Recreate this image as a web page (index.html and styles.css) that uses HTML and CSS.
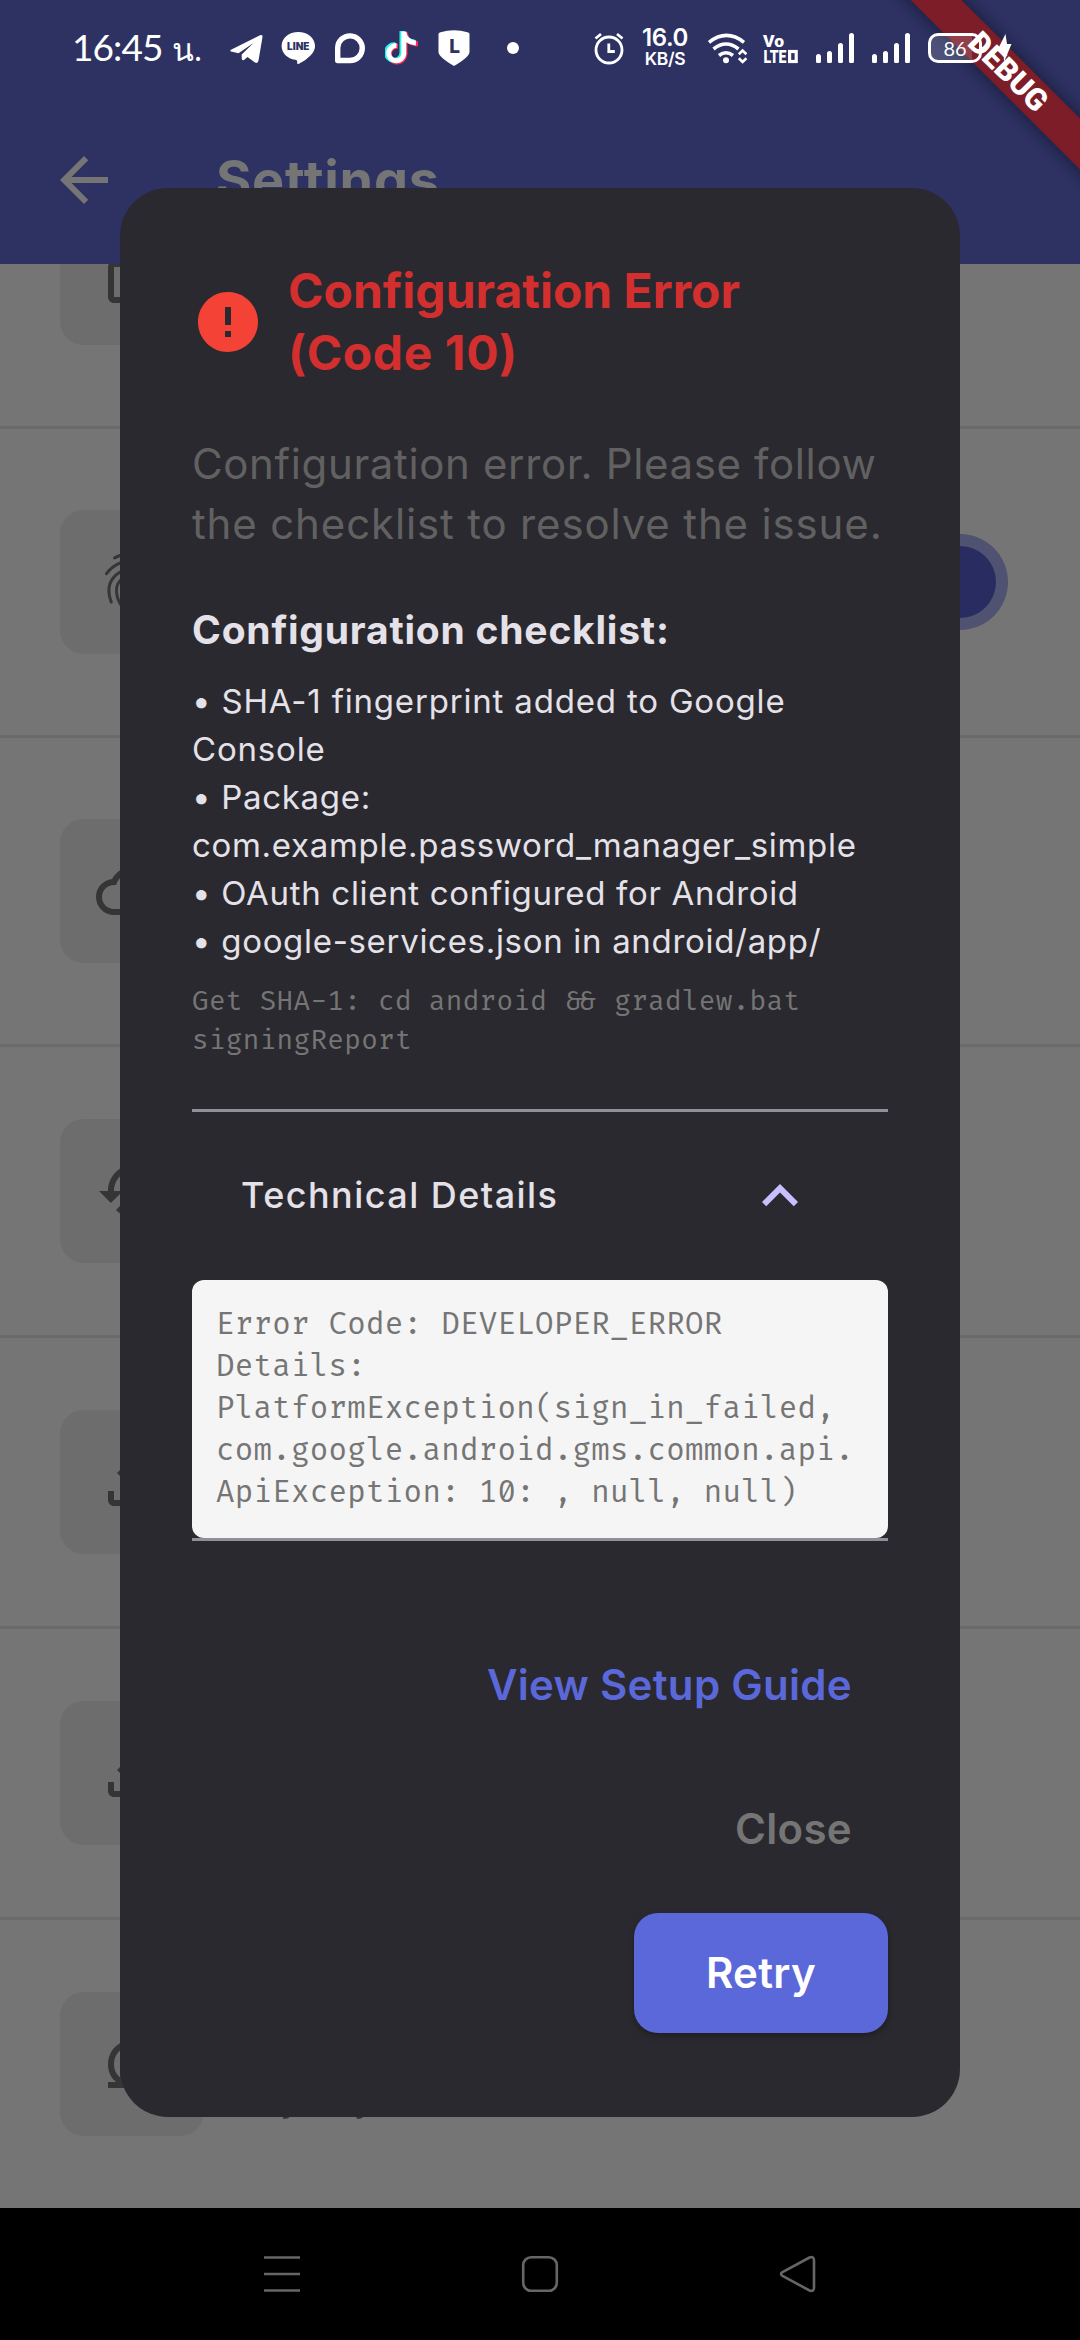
FILE: index.html
```html
<!DOCTYPE html>
<html lang="en">
<head>
<meta charset="utf-8">
<title>Settings</title>
<link rel="stylesheet" href="styles.css">
</head>
<body>
<div class="screen">
  <header class="appbar">
    <svg class="back" viewBox="0 0 24 24"><path d="M20 11H7.83l5.59-5.59L12 4l-8 8 8 8 1.41-1.41L7.83 13H20v-2z"/></svg>
    <h1 class="appbar-title">Settings</h1>
  </header>

  <main class="list">
    <div class="row tall">
      <div class="tile"><svg viewBox="0 0 24 24"><path d="M18 8h-1V6c0-2.76-2.24-5-5-5S7 3.24 7 6v2H6c-1.1 0-2 .9-2 2v10c0 1.1.9 2 2 2h12c1.1 0 2-.9 2-2V10c0-1.100-.9-2-2-2zM9 6c0-1.660 1.340-3 3-3s3 1.340 3 3v2H9V6zm9 14H6V10h12v10z"/></svg></div>
    </div>
    <div class="row tall">
      <div class="tile"><svg viewBox="0 0 24 24"><path d="M17.810 4.470c-.08 0-.16-.02-.23-.06C15.660 3.420 14 3 12.010 3c-1.980 0-3.860.47-5.570 1.410-.24.130-.54.040-.68-.2-.13-.24-.04-.55.200-.68C7.820 2.520 9.860 2 12.010 2c2.130 0 3.990.47 6.030 1.520.250.130.340.430.210.670-.09.180-.26.280-.44.280zM3.500 9.720c-.1 0-.2-.03-.29-.09-.23-.16-.28-.47-.12-.7.990-1.400 2.250-2.500 3.750-3.270C9.980 4.040 14 4.030 17.150 5.650c1.500.770 2.760 1.860 3.750 3.250.160.220.110.540-.12.700-.23.160-.54.110-.7-.12-.9-1.260-2.040-2.250-3.390-2.940-2.870-1.470-6.540-1.470-9.400.01-1.360.7-2.500 1.700-3.400 2.960-.08.140-.23.210-.39.210zm6.250 12.070c-.13 0-.26-.05-.35-.15-.87-.87-1.340-1.430-2.010-2.640-.69-1.230-1.050-2.730-1.050-4.340 0-2.970 2.540-5.390 5.660-5.390s5.660 2.420 5.660 5.390c0 .28-.22.500-.5.500s-.5-.22-.5-.5c0-2.420-2.090-4.390-4.660-4.390-2.570 0-4.660 1.970-4.660 4.390 0 1.440.32 2.770.93 3.850.64 1.150 1.080 1.640 1.850 2.420.190.200.190.510 0 .71-.11.100-.24.150-.37.150zM5.100 19.200c-.2 0-.38-.12-.46-.31-.6-1.500-.85-2.900-.82-4.300.12-4.100 3.700-7.300 8.100-7.300 4.500 0 8.200 3.400 8.200 7.600h-1c0-3.700-3.200-6.600-7.200-6.600-3.900 0-7 2.800-7.100 6.400-.02 1.200.2 2.500.74 3.820.1.260-.02.550-.27.650z"/></svg></div>
      <div class="switch"><span class="thumb"></span></div>
    </div>
    <div class="row tall">
      <div class="tile"><svg viewBox="0 0 24 24"><path d="M19.350 10.040C18.670 6.590 15.640 4 12 4 9.110 4 6.600 5.640 5.350 8.040 2.340 8.360 0 10.910 0 14c0 3.310 2.690 6 6 6h13c2.760 0 5-2.240 5-5 0-2.640-2.050-4.780-4.650-4.960zM19 18H6c-2.210 0-4-1.790-4-4s1.790-4 4-4h.71C7.370 7.690 9.480 6 12 6c3.040 0 5.500 2.460 5.500 5.500v.5H19c1.660 0 3 1.340 3 3s-1.340 3-3 3z"/></svg></div>
    </div>
    <div class="row">
      <div class="tile"><svg viewBox="0 0 24 24"><path d="M13 3c-4.970 0-9 4.030-9 9H1l3.890 3.890.07.14L9 12H6c0-3.870 3.130-7 7-7s7 3.130 7 7-3.130 7-7 7c-1.930 0-3.680-.79-4.940-2.060l-1.420 1.420C8.270 19.990 10.510 21 13 21c4.970 0 9-4.030 9-9s-4.030-9-9-9z"/></svg></div>
    </div>
    <div class="row">
      <div class="tile"><svg viewBox="0 0 24 24"><path d="M18 15v3H6v-3H4v3c0 1.100.9 2 2 2h12c1.100 0 2-.9 2-2v-3h-2zM7 9l1.410 1.410L11 7.830V16h2V7.830l2.590 2.580L17 9l-5-5-5 5z"/></svg></div>
    </div>
    <div class="row">
      <div class="tile"><svg viewBox="0 0 24 24"><path d="M18 15v3H6v-3H4v3c0 1.100.9 2 2 2h12c1.100 0 2-.9 2-2v-3h-2zm-1-4l-1.410-1.410L13 12.170V4h-2v8.170L8.410 9.590 7 11l5 5 5-5z"/></svg></div>
    </div>
    <div class="row last">
      <div class="tile"><svg viewBox="0 0 24 24"><path d="M4 20v-2h2.750l-.4-.35C4.800 16.270 4 14.370 4 12.050 4 8.300 6.400 5.200 10 4.250v2.100c-2.500.95-4 3.100-4 5.700 0 1.700.6 3.100 1.750 4.200l.25.200V14h2v6H4zM14 19.750v-2.100c2.500-.95 4-3.100 4-5.700 0-1.600-.6-3-1.750-4.200L16 7.550V10h-2V4h6v2h-2.750l.4.350C19.200 7.800 20 9.800 20 11.950c0 3.800-2.400 6.900-6 7.800z"/></svg></div>
      <p class="row-sub">Try my</p>
    </div>
  </main>

  <nav class="navbar">
    <svg viewBox="0 0 40 40"><path d="M2 3.500h36M2 20h36M2 36.500h36"/></svg>
    <svg viewBox="0 0 40 40"><rect x="3.200" y="3.200" width="33.600" height="33.600" rx="8"/></svg>
    <svg viewBox="0 0 40 40"><path d="M4.500 18.200L31.500 3.500Q36 2 36 6.500V33.500Q36 38 31.500 36.500L4.500 21.800Q1.500 20 4.500 18.200z"/></svg>
  </nav>

  <div class="overlay">
    <section class="dialog">
      <div class="dialog-head">
        <svg class="alert" viewBox="0 0 24 24"><path d="M12 2C6.480 2 2 6.480 2 12s4.480 10 10 10 10-4.480 10-10S17.520 2 12 2zm1 15h-2v-2h2v2zm0-4h-2V7h2v6z"/></svg>
        <h2>Configuration Error<br><span class="code">(Code 10)</span></h2>
      </div>
      <p class="message">Configuration error. Please follow<br><span class="wide">the checklist to resolve the issue.</span></p>
      <h3>Configuration checklist:</h3>
      <div class="checks">
        <p class="wide">• SHA-1 fingerprint added to Google<br>Console</p>
        <p>• Package:<br>com.example.password_manager_simple</p>
        <p>• OAuth client configured for Android</p>
        <p>• google-services.json in android/app/</p>
      </div>
      <p class="hint">Get SHA-1: cd android <span class="amp">&amp;&amp;</span> gradlew.bat<br>signingReport</p>
      <div class="details">
        <div class="details-head">
          <span>Technical Details</span>
          <svg viewBox="0 0 24 24"><path d="M12 8l-6 6 1.410 1.410L12 10.830l4.590 4.580L18 14z"/></svg>
        </div>
        <p class="log">Error Code: DEVELOPER_ERROR<br>Details:<br>PlatformException(sign_in_failed,<br>com.google.android.gms.common.api.<br>ApiException: 10: , null, null)</p>
      </div>
      <div class="actions">
        <button class="text-btn primary">View Setup Guide</button>
        <button class="text-btn close">Close</button>
        <button class="filled-btn">Retry</button>
      </div>
    </section>
  </div>

  <div class="banner-clip"><div class="banner">DEBUG</div></div>

  <div class="statusbar">
    <span class="time">16:45 <span class="thai">น.</span></span>
    <svg class="s-telegram" viewBox="230 30 33 36"><path d="M231 51.500Q229.500 50.500 231.500 49.500L260 35.300Q262.800 34.400 262.500 37L258.500 60.500Q257.800 64 255 62.500L247.500 57L244 60Q242 61 241.700 58.500V54.500L253.500 43L238.500 53.200Z"/></svg>
    <svg class="s-line" viewBox="281 30 35 36"><path d="M298.300 32c9.300 0 16.700 6.200 16.700 13.800 0 6-4 9.500-8.500 13.200-3 2.400-7 4.600-8.300 5-1.300.4-1-.8-1-2.200 0-1.200-.4-1.800-2-2-7.700-1-13.600-6.600-13.600-14C281.600 38.200 289 32 298.300 32z"/><text x="298.300" y="50.300">LINE</text></svg>
    <svg class="s-bubble" viewBox="334 32 32 32"><path d="M337.700 60.500V47.500A12.300 12.300 0 1 1 350 60.500Z"/></svg>
    <svg class="s-tiktok" viewBox="385 29 35 38">
      <path stroke="#ff2d55" d="M405 32V54.500A7.800 7.800 0 1 1 398 46.400M405.500 34C406.500 40 411 43.500 418 44"/>
      <path stroke="#25f4ee" d="M402 31V53A7.800 7.800 0 1 1 395 44.800M402.500 32C403.500 38 408 41.500 414.500 42"/>
      <path stroke="#fff" d="M403.800 31.500V54A7.600 7.600 0 1 1 396.500 45.600M404 33C405 39 409 42.500 416 43"/>
    </svg>
    <svg class="s-shield" viewBox="437 29 34 38"><path d="M438.500 35Q438 33 440.500 32.200 454 28.500 467.500 32.200 470 33 469.500 35V52Q469.500 57 454 66 438.500 57 438.500 52Z"/><text x="454.600" y="53">L</text></svg>
    <svg class="s-dot" viewBox="0 0 12 12"><circle cx="6" cy="6" r="6"/></svg>

    <svg class="s-alarm" viewBox="593 31 32 34"><circle cx="609" cy="50" r="13"/><path d="M608.800 43.500v8h6"/><path d="M595.500 38.500l5.500-4.500M622.500 38.500l-5.500-4.500"/></svg>
    <span class="speed"><b>16.0</b><b class="unit">KB/S</b></span>
    <svg class="s-wifi" viewBox="707 31 42 34"><path class="w" d="M709 42.300Q726.500 28.500 744 42.300M713.500 49Q726 39 738.500 49M719 55.500Q726 50 733 55.500"/><circle cx="726" cy="60.200" r="3"/><path class="a" d="M738.800 54.200l3.800-3.700 3.800 3.700M738.800 58.200l3.800 3.700 3.800-3.700"/></svg>
    <svg class="s-volte" viewBox="762 31 38 34"><text x="763" y="46.500" textLength="21" lengthAdjust="spacingAndGlyphs">Vo</text><text class="lte" x="763.500" y="63" textLength="23" lengthAdjust="spacingAndGlyphs">LTE</text><rect x="789.600" y="51.500" width="6.600" height="10"/></svg>
    <svg class="s-bars" viewBox="0 0 38 30"><path d="M2.500 23.500V28M13.500 20.500V28M24.500 12.500V28M35.500 2.500V28"/></svg>
    <svg class="s-bars two" viewBox="0 0 38 30"><path d="M2.500 23.500V28M13.500 20.500V28M24.500 12.500V28M35.500 2.500V28"/></svg>
    <span class="battery">86</span>
    <svg class="s-bolt" viewBox="0 0 16 28"><path d="M9.500 0L11 10H15.500L8 28 7.500 17H1Z"/></svg>
  </div>
</div>
</body>
</html>
```
FILE: styles.css
```css
* { box-sizing: border-box; margin: 0; padding: 0; }

body {
  background: #000;
  font-family: Inter, "Noto Sans", sans-serif;
}

.screen {
  position: relative;
  display: flex;
  flex-direction: column;
  width: 1080px;
  height: 2340px;
  overflow: hidden;
  background: #757575;
}

/* App bar */
.appbar {
  flex: none;
  display: flex;
  align-items: center;
  gap: 96px;
  height: 264px;
  padding: 96px 48px 0;
  background: #2d3263;
}
.back { width: 72px; height: 72px; fill: #757575; }
.appbar-title {
  font-size: 54px;
  font-weight: 700;
  line-height: 72px;
  letter-spacing: 0.75px;
  color: #757575;
}

/* Settings list */
.list {
  flex: 1;
  min-height: 0;
  display: flex;
  flex-direction: column;
  justify-content: flex-end;
  overflow: hidden;
}
.row {
  flex: none;
  display: flex;
  align-items: center;
  height: 291px;
  padding: 0 72px 0 60px;
  border-bottom: 3px solid #6a6a6a;
}
.row.tall { height: 309px; }
.row.last { height: 288px; border-bottom: 0; }
.tile {
  display: flex;
  align-items: center;
  justify-content: center;
  width: 144px;
  height: 144px;
  border-radius: 24px;
  background: #6d6d6d;
}
.tile svg { width: 72px; height: 72px; fill: #353535; }
.switch {
  display: flex;
  justify-content: flex-end;
  width: 156px;
  height: 96px;
  margin-left: auto;
  padding: 12px;
  border-radius: 48px;
  background: #4f5270;
}
.thumb { width: 72px; height: 72px; border-radius: 50%; background: #282c60; }
.row-sub {
  margin: 68px 0 0 39px;
  font-size: 36px;
  line-height: 48px;
  letter-spacing: 1px;
  word-spacing: 9px;
  color: #353535;
}

/* System navigation */
.navbar {
  flex: none;
  display: flex;
  align-items: center;
  justify-content: center;
  gap: 218px;
  height: 132px;
  background: #000;
}
.navbar svg {
  width: 40px;
  height: 40px;
  fill: none;
  stroke: #666;
  stroke-width: 2.6;
}

/* Dialog */
.overlay {
  position: absolute;
  inset: 96px 0 132px;
  display: flex;
  align-items: center;
  justify-content: center;
}
.dialog {
  width: 840px;
  height: 1929px;
  padding: 72px;
  border-radius: 48px;
  background: #2a292f;
  color: #e5e1e9;
}
.dialog-head { display: flex; align-items: center; gap: 24px; }
.alert { width: 72px; height: 72px; fill: #f44336; }
.dialog-head h2 {
  font-size: 48px;
  font-weight: 700;
  line-height: 62.5px;
  color: #d32f2f;
}
.code { letter-spacing: 0.6px; }
.message {
  margin-top: 49px;
  font-size: 42px;
  line-height: 60px;
  letter-spacing: 0.63px;
  color: #616161;
}
.message .wide { letter-spacing: 0.85px; }
.dialog h3 {
  margin-top: 48px;
  font-size: 39px;
  font-weight: 700;
  line-height: 56px;
  letter-spacing: 0.78px;
}
.checks {
  margin-top: 19px;
  font-size: 33px;
  line-height: 48px;
  letter-spacing: 0.69px;
}
.checks .wide { letter-spacing: 0.82px; }
.hint, .log {
  font-family: "Fira Code", "Liberation Mono", monospace;
  letter-spacing: 0.3px;
  color: #757575;
}
.hint { margin-top: 17px; font-size: 27px; line-height: 39px; }
.amp { letter-spacing: 0; }
.details {
  margin-top: 49px;
  border-top: 3px solid #928f99;
  border-bottom: 3px solid #928f99;
}
.details-head {
  display: flex;
  align-items: center;
  justify-content: space-between;
  height: 168px;
  padding: 0 72px 0 49px;
  font-size: 36px;
  font-weight: 500;
  letter-spacing: 1.45px;
}
.details-head span { margin-bottom: 2px; }
.details-head svg { width: 72px; height: 72px; fill: #c8bfff; }
.log {
  padding: 24px;
  border-radius: 12px;
  background: #f5f5f5;
  font-size: 30px;
  line-height: 42px;
}
.actions {
  display: flex;
  flex-direction: column;
  align-items: flex-end;
  gap: 24px;
  margin-top: 84px;
}
.actions button {
  height: 120px;
  border: 0;
  border-radius: 24px;
  background: none;
  font: 600 42px/60px Inter, sans-serif;
  letter-spacing: 0.3px;
}
.text-btn { padding: 0 36px; }
.actions .primary { color: #5b68d9; }
.actions .close { color: #757575; }
.actions .filled-btn {
  padding: 0 72px;
  background: #5b68d9;
  color: #fff;
  box-shadow: 0 3px 6px rgba(0, 0, 0, 0.3);
}

/* Corner ribbon */
.banner-clip {
  position: absolute;
  top: 0;
  right: 0;
  width: 240px;
  height: 240px;
  overflow: hidden;
}
.banner {
  position: absolute;
  left: 8px;
  top: 54px;
  width: 320px;
  height: 36px;
  background: #7d1d27;
  box-shadow: 0 0 18px rgba(0, 0, 0, 0.5);
  color: #fff;
  font: 900 30.6px/36px Roboto, sans-serif;
  text-align: center;
  transform: rotate(45deg);
}

/* Status bar */
.statusbar {
  position: absolute;
  inset: 0 0 auto;
  display: flex;
  align-items: center;
  height: 96px;
  padding-left: 72px;
  color: #fff;
}
.statusbar svg { flex: none; fill: #fff; }
.time {
  flex: none;
  width: 158px;
  font: 400 37px/48px Lato, "Noto Sans", sans-serif;
  letter-spacing: -0.9px;
  white-space: nowrap;
}
.thai { margin-left: 1px; font-size: 32px; letter-spacing: 0; }
.s-telegram { width: 33px; height: 36px; }
.s-line { width: 35px; height: 36px; margin-left: 18px; }
.s-line text {
  fill: #2d3263;
  font: 900 10px Inter, sans-serif;
  text-anchor: middle;
}
.s-bubble { width: 32px; height: 32px; margin-left: 18px; }
.statusbar .s-bubble { fill: none; stroke: #fff; stroke-width: 5.4; stroke-linejoin: round; }
.s-tiktok { width: 35px; height: 38px; margin-left: 19px; }
.statusbar .s-tiktok { fill: none; stroke-width: 5; }
.s-shield { width: 34px; height: 38px; margin-left: 17px; }
.s-shield text {
  fill: #2d3263;
  font: 800 19px Inter, sans-serif;
  text-anchor: middle;
}
.s-dot { width: 12px; height: 12px; margin-left: 36px; }
.s-alarm { width: 32px; height: 34px; margin-left: 74px; }
.statusbar .s-alarm { fill: none; stroke: #fff; stroke-width: 2.8; }
.speed {
  flex: none;
  display: flex;
  flex-direction: column;
  align-items: center;
  gap: 3px;
  width: 48px;
  margin-left: 16px;
  font: 600 24px/18px Inter, sans-serif;
}
.speed b { font-weight: 600; letter-spacing: -0.4px; }
.speed .unit { font-size: 17.5px; line-height: 17px; }
.s-wifi { width: 42px; height: 34px; margin-left: 18px; }
.s-wifi .w { fill: none; stroke: #fff; stroke-width: 3.6; }
.s-wifi .a { fill: none; stroke: #fff; stroke-width: 2.6; }
.s-volte { width: 38px; height: 34px; margin-left: 13px; overflow: visible; }
.s-volte text { font: 900 17px Roboto, sans-serif; fill: #fff; }
.s-volte .lte { font-size: 18.5px; }
.s-volte rect { fill: none; stroke: #fff; stroke-width: 3.2; }
.s-bars { width: 38px; height: 30px; margin-left: 16px; }
.s-bars.two { margin-left: 18px; }
.s-bars path { stroke: #fff; stroke-width: 5; stroke-linecap: round; }
.battery {
  flex: none;
  width: 54px;
  height: 30px;
  margin-left: 18px;
  border: 3px solid #fff;
  border-radius: 10px;
  background: linear-gradient(90deg, rgba(255, 255, 255, 0.16) 86%, transparent 86%);
  font: 400 20px/24px Lato, sans-serif;
  text-align: center;
}
.s-bolt { width: 16px; height: 28px; margin-left: 14px; }
```
